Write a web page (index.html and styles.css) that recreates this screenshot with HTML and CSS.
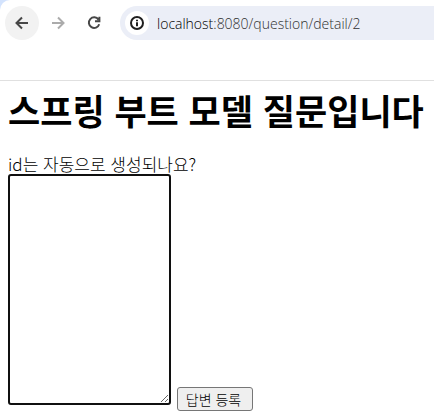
FILE: index.html
```
<!DOCTYPE html>
<html lang="ko">
<head>
  <meta charset="UTF-8">
  <meta name="viewport" content="width=device-width, initial-scale=1.0">
  <title>스프링 부트 모델 질문입니다</title>
  <link rel="stylesheet" href="styles.css">
</head>
<body>
  <div class="browser">
    <header class="toolbar">
      <button type="button" class="nav-btn active" aria-label="Back">
        <svg width="16" height="16" viewBox="0 0 16 16"><path d="M14 8H3M8 2.500L2.500 8L8 13.500"/></svg>
      </button>
      <button type="button" class="nav-btn disabled" aria-label="Forward">
        <svg width="16" height="16" viewBox="0 0 16 16"><path d="M2 8H13M8 2.500L13.500 8L8 13.500"/></svg>
      </button>
      <button type="button" class="nav-btn" aria-label="Reload">
        <svg width="16" height="16" viewBox="0 0 16 16"><path d="M12.500 4.600A5.300 5.300 0 1 0 13.200 9.300M13.400 1.800V6.200H9"/></svg>
      </button>
      <div class="address">
        <button type="button" class="info-btn" aria-label="Site information">
          <svg width="16" height="16" viewBox="0 0 16 16"><circle cx="8" cy="8" r="6"/><path d="M8 7.300V11.200M8 4.700V6.200"/></svg>
        </button>
        <a class="url" href="/question/detail/2"><span class="host">localhost</span>:8080/question/detail/2</a>
      </div>
    </header>
    <main class="page">
      <h1>스프링 부트 모델 질문입니다</h1>
      <div class="content">id는 자동으로 생성되나요?</div>
      <form>
        <textarea name="content" rows="15" aria-label="답변"></textarea>
        <button type="submit" class="submit-btn">답변 등록</button>
      </form>
    </main>
  </div>
</body>
</html>
```
FILE: styles.css
```
* {
  box-sizing: border-box;
}
body {
  margin: 0;
  background: #fff;
  color: #000;
  font-family: "Noto Sans CJK KR", sans-serif;
  font-size: 17px;
  font-weight: 300;
}
.browser {
  background: linear-gradient(#d3e3fd, #d3e3fd) top left / 12px 12px no-repeat;
}
.toolbar {
  display: flex;
  align-items: flex-start;
  gap: 2px;
  height: 81px;
  padding: 6px 0 0 5px;
  border-bottom: 1px solid #e0e0e0;
  border-top-left-radius: 10px;
  background: #fff;
}
.nav-btn {
  display: flex;
  align-items: center;
  justify-content: center;
  flex: none;
  width: 34px;
  height: 34px;
  padding: 0;
  border: 0;
  border-radius: 50%;
  background: none;
  color: #474747;
}
.nav-btn.active {
  background: #f2f2f2;
}
.nav-btn.disabled {
  color: #ababab;
}
svg {
  fill: none;
  stroke: currentColor;
  stroke-width: 2;
}
.address {
  display: flex;
  align-items: center;
  flex: 1;
  gap: 8px;
  height: 34px;
  margin-left: 7px;
  padding-left: 5px;
  border-radius: 17px 0 0 17px;
  background: #ebeef7;
}
.info-btn {
  display: flex;
  align-items: center;
  justify-content: center;
  width: 24px;
  height: 24px;
  padding: 0;
  border: 0;
  border-radius: 50%;
  background: #fff;
  color: #1f1f1f;
}
.url {
  color: #303030;
  font-family: "Open Sans", sans-serif;
  font-size: 14px;
  text-decoration: none;
  white-space: nowrap;
}
.host {
  color: #000;
}
.page {
  padding: 8px;
}
h1 {
  margin: 0 0 22px;
  font-size: 35px;
  line-height: 42px;
  white-space: nowrap;
}
.content {
  line-height: 21px;
}
textarea {
  width: 163px;
  height: 231px;
  margin-right: 1px;
  border: 2px solid #101010;
  border-radius: 3px;
  outline: none;
  background: #fff;
  resize: both;
}
.submit-btn {
  height: 24px;
  padding: 0 11px 0 8px;
  border: 1px solid #767676;
  border-radius: 3px;
  background: #efefef;
  color: #000;
  font-family: inherit;
  font-size: 14px;
  font-weight: 300;
  line-height: 20px;
}
```
